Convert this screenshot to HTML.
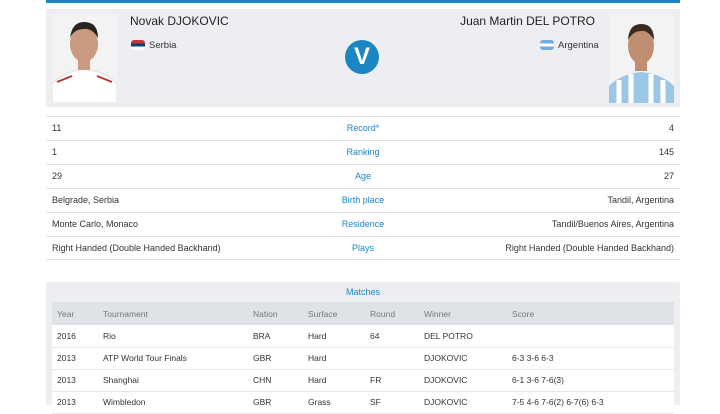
<!DOCTYPE html>
<html><head><meta charset="utf-8"><style>
*{margin:0;padding:0;box-sizing:border-box}
body{width:720px;height:405px;overflow:hidden;background:#fff;font-family:"Liberation Sans",sans-serif;color:#333;position:relative}
.abs{position:absolute}
.topbar{left:46px;top:0;width:634px;height:3px;background:#1a86c4}
.hdr{left:46px;top:9px;width:634px;height:98px;background:#eceef1}
.photo{top:14px;width:65px;height:89px;background:#f4f4f4;overflow:hidden}
.name{font-size:12px;color:#222}
.country{font-size:9.5px;color:#333}
.v{left:345px;top:40px;width:34px;height:34px;border-radius:50%;background:#1a86c4;color:#fff;font-size:24px;font-weight:bold;text-align:center;line-height:34px}
.row{left:46px;width:634px;height:24px;border-top:1px solid #e4e4e4;font-size:9px;line-height:23px}
.row span{position:absolute}
.l{left:6px}.r{right:6px}.c{left:0;width:634px;text-align:center;color:#1a86c4}
.mbox{left:46px;top:282px;width:634px;height:123px;background:#eceef1}
table{position:absolute;left:52px;top:302px;width:622px;border-collapse:collapse;font-size:8.5px;table-layout:fixed}
th{background:#dfe2e6;color:#777;font-weight:normal;text-align:left;height:23px;padding-left:5px}
td{background:#fff;height:22px;border-bottom:1px solid #e6e6e6;padding-left:5px;color:#333}
</style></head><body>
<div class="abs topbar"></div>
<div class="abs hdr"></div>
<div class="abs photo" style="left:52px">
<svg width="65" height="89"><rect width="65" height="89" fill="#f3f3f3"/><path d="M0 89 L0 70 Q10 58 32 55 Q55 58 65 70 L65 89Z" fill="#fff" stroke="#ddd"/><path d="M5 68 L20 62 M45 62 L60 68" stroke="#b33" stroke-width="2"/><ellipse cx="32" cy="30" rx="14" ry="18" fill="#c99a7d"/><path d="M18 24 Q20 8 32 8 Q46 8 46 24 Q40 14 32 15 Q22 15 18 24Z" fill="#2a2420"/><rect x="26" y="46" width="12" height="10" fill="#c99a7d"/></svg></div>
<div class="abs photo" style="left:609px">
<svg width="65" height="89"><rect width="65" height="89" fill="#f3f3f3"/><path d="M0 89 L0 72 Q12 60 32 58 Q53 60 65 72 L65 89Z" fill="#9cc6e6"/><path d="M10 89 V66 M22 89 V60 M42 89 V60 M54 89 V66" stroke="#fff" stroke-width="5"/><ellipse cx="32" cy="32" rx="13" ry="18" fill="#c08e70"/><path d="M19 26 Q20 10 32 10 Q45 10 45 26 Q39 16 32 17 Q24 17 19 26Z" fill="#3a2a20"/><rect x="26" y="47" width="12" height="10" fill="#c08e70"/></svg></div>
<div class="abs name" style="left:130px;top:14px">Novak DJOKOVIC</div>
<div class="abs" style="left:131px;top:40px;width:14px;height:10px;border-radius:3px;background:linear-gradient(#c6363c 33%,#0c4077 33% 66%,#fff 66%)"></div>
<div class="abs country" style="left:149px;top:40px">Serbia</div>
<div class="abs name" style="right:125px;top:14px">Juan Martin DEL POTRO</div>
<div class="abs" style="left:540px;top:40px;width:14px;height:10px;border-radius:3px;background:linear-gradient(#74acdf 33%,#fff 33% 66%,#74acdf 66%)"></div>
<div class="abs country" style="left:558px;top:40px">Argentina</div>
<div class="abs v">V</div>
<div class="abs row" style="top:116px"><span class="l">11</span><span class="c">Record*</span><span class="r">4</span></div>
<div class="abs row" style="top:140px"><span class="l">1</span><span class="c">Ranking</span><span class="r">145</span></div>
<div class="abs row" style="top:164px"><span class="l">29</span><span class="c">Age</span><span class="r">27</span></div>
<div class="abs row" style="top:188px"><span class="l">Belgrade, Serbia</span><span class="c">Birth place</span><span class="r">Tandil, Argentina</span></div>
<div class="abs row" style="top:212px"><span class="l">Monte Carlo, Monaco</span><span class="c">Residence</span><span class="r">Tandil/Buenos Aires, Argentina</span></div>
<div class="abs row" style="top:236px;border-bottom:1px solid #e4e4e4"><span class="l">Right Handed (Double Handed Backhand)</span><span class="c">Plays</span><span class="r">Right Handed (Double Handed Backhand)</span></div>
<div class="abs mbox"></div>
<div class="abs" style="left:46px;top:287px;width:634px;text-align:center;font-size:9px;color:#1a86c4">Matches</div>
<table>
<tr><th style="width:46px">Year</th><th style="width:150px">Tournament</th><th style="width:55px">Nation</th><th style="width:62px">Surface</th><th style="width:54px">Round</th><th style="width:88px">Winner</th><th>Score</th></tr>
<tr><td>2016</td><td>Rio</td><td>BRA</td><td>Hard</td><td>64</td><td>DEL POTRO</td><td></td></tr>
<tr><td>2013</td><td>ATP World Tour Finals</td><td>GBR</td><td>Hard</td><td></td><td>DJOKOVIC</td><td>6-3 3-6 6-3</td></tr>
<tr><td>2013</td><td>Shanghai</td><td>CHN</td><td>Hard</td><td>FR</td><td>DJOKOVIC</td><td>6-1 3-6 7-6(3)</td></tr>
<tr><td>2013</td><td>Wimbledon</td><td>GBR</td><td>Grass</td><td>SF</td><td>DJOKOVIC</td><td>7-5 4-6 7-6(2) 6-7(6) 6-3</td></tr>
</table>
</body></html>
